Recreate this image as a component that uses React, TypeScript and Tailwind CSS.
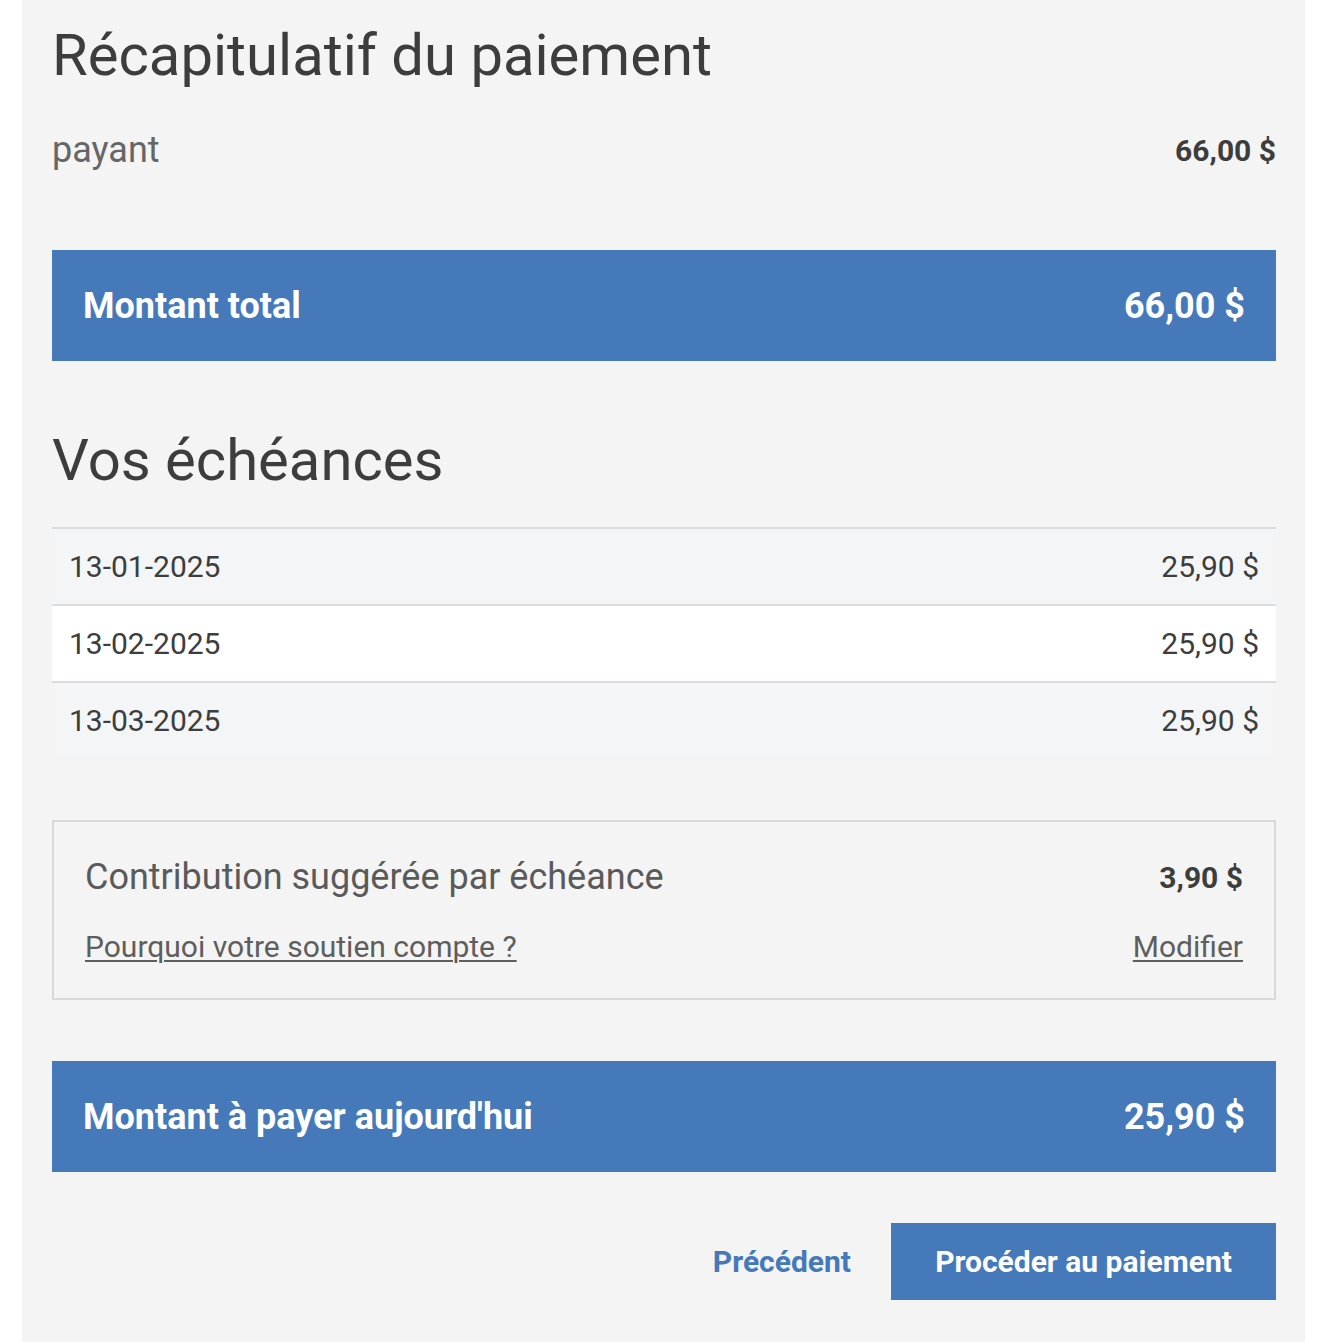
import React from 'react'

const FONT = { fontFamily: 'Roboto, "Noto Sans", sans-serif' }

const schedule = [
  { date: '13-01-2025', amount: '25,90 $', bg: 'bg-[#f4f5f7]' },
  { date: '13-02-2025', amount: '25,90 $', bg: 'bg-white' },
  { date: '13-03-2025', amount: '25,90 $', bg: 'bg-[#f4f5f7]' },
]

function TotalBar({ label, amount }: { label: string; amount: string }) {
  return (
    <div className="h-[111px] bg-[#4579b9] flex items-center justify-between pl-[31px] pr-[31px] text-white font-bold text-[36px]">
      <span>{label}</span>
      <span>{amount}</span>
    </div>
  )
}

export default function App() {
  return (
    <div className="min-h-screen bg-white" style={FONT}>
      <div className="ml-[22px] w-[1283px] min-h-[1342px] bg-[#f4f4f4] pl-[30px] pr-[29px] pt-[19px]">
        <h1 className="text-[58px] leading-[72px] text-[#3d3d3d] font-normal">Récapitulatif du paiement</h1>

        <div className="mt-[37px] flex items-center justify-between h-[44px]">
          <span className="text-[36px] text-[#666666]">payant</span>
          <span className="text-[30px] font-bold text-[#3d3d3d]">66,00 $</span>
        </div>

        <div className="mt-[78px]">
          <TotalBar label="Montant total" amount="66,00 $" />
        </div>

        <h2 className="mt-[64px] text-[58px] leading-[70px] text-[#3d3d3d] font-normal">Vos échéances</h2>

        <div className="mt-[32px]">
          {schedule.map((row) => (
            <div
              key={row.date}
              className={`${row.bg} border-t-2 border-[#dcdcdc] h-[77px] flex items-center justify-between px-[17px] text-[30px] text-[#3d3d3d]`}
            >
              <span>{row.date}</span>
              <span>{row.amount}</span>
            </div>
          ))}
        </div>

        <div className="mt-[62px] border-2 border-[#d9d9d9] h-[180px] px-[31px] pt-[33px]">
          <div className="flex items-center justify-between h-[44px]">
            <span className="text-[36px] text-[#5a5a5a]">Contribution suggérée par échéance</span>
            <span className="text-[30px] font-bold text-[#3d3d3d]">3,90 $</span>
          </div>
          <div className="mt-[25px] flex items-center justify-between h-[44px] text-[30px] text-[#5e5e5e]">
            <a className="underline decoration-2 underline-offset-[3px]" href="#">Pourquoi votre soutien compte ?</a>
            <a className="underline decoration-2 underline-offset-[3px]" href="#">Modifier</a>
          </div>
        </div>

        <div className="mt-[61px]">
          <TotalBar label="Montant à payer aujourd'hui" amount="25,90 $" />
        </div>

        <div className="mt-[51px] flex items-center justify-end gap-[40px]">
          <button type="button" className="text-[30px] font-bold text-[#4579b9]">Précédent</button>
          <button type="button" className="h-[77px] w-[385px] bg-[#4579b9] text-white text-[30px] font-bold">
            Procéder au paiement
          </button>
        </div>
      </div>
    </div>
  )
}
